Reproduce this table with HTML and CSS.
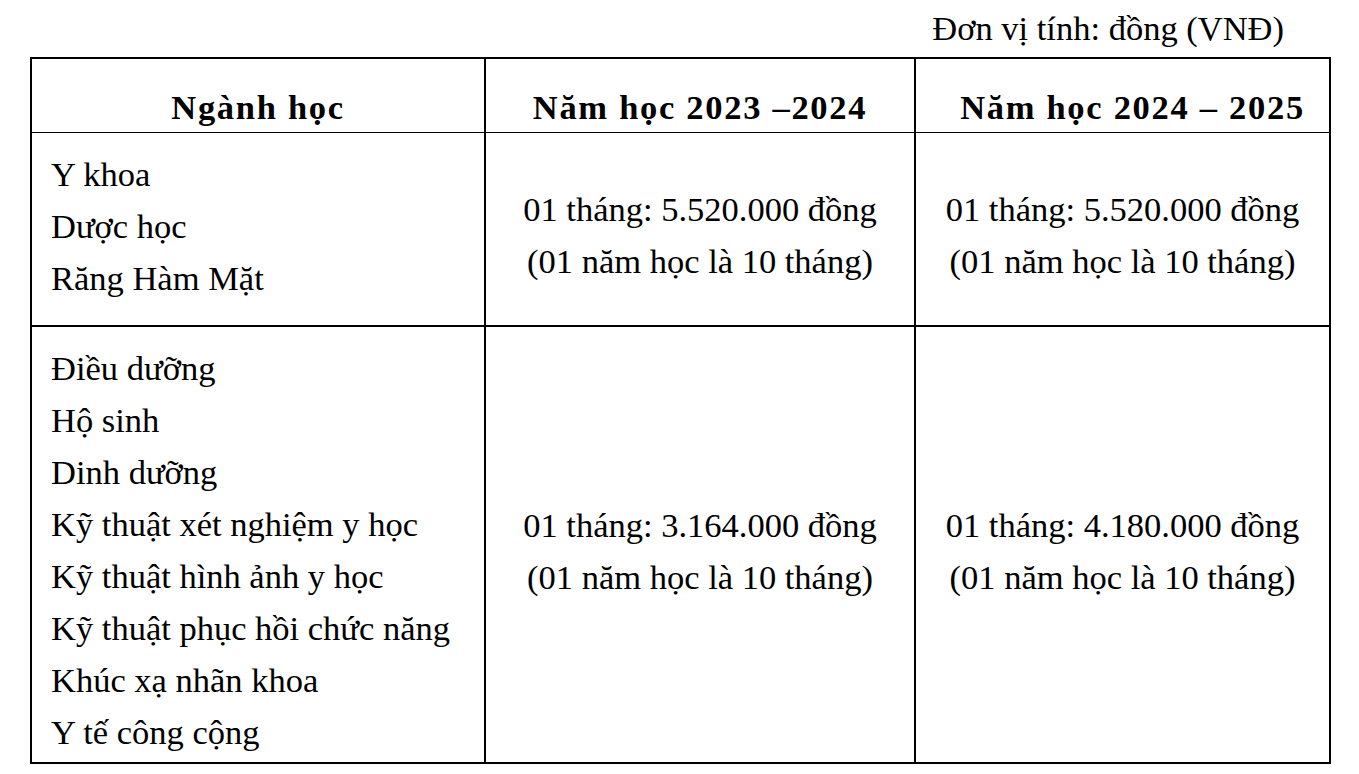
FILE: index.html
```html
<!DOCTYPE html>
<html lang="vi">
<head>
<meta charset="utf-8">
<title>Học phí</title>
<link rel="stylesheet" href="styles.css">
</head>
<body>
<div class="page">
  <p class="unit">Đơn vị tính: đồng (VNĐ)</p>
  <table class="fees">
    <colgroup>
      <col class="c1">
      <col class="c2">
      <col class="c3">
    </colgroup>
    <thead>
      <tr class="head">
        <th>Ngành học</th>
        <th>Năm học 2023 –2024</th>
        <th class="shift">Năm học 2024 – 2025</th>
      </tr>
    </thead>
    <tbody>
      <tr class="r1">
        <td class="majors">Y khoa<br>Dược học<br>Răng Hàm Mặt</td>
        <td class="fee">01 tháng: 5.520.000 đồng<br>(01 năm học là 10 tháng)</td>
        <td class="fee">01 tháng: 5.520.000 đồng<br>(01 năm học là 10 tháng)</td>
      </tr>
      <tr class="r2">
        <td class="majors">Điều dưỡng<br>Hộ sinh<br>Dinh dưỡng<br>Kỹ thuật xét nghiệm y học<br>Kỹ thuật hình ảnh y học<br>Kỹ thuật phục hồi chức năng<br>Khúc xạ nhãn khoa<br>Y tế công cộng</td>
        <td class="fee">01 tháng: 3.164.000 đồng<br>(01 năm học là 10 tháng)</td>
        <td class="fee">01 tháng: 4.180.000 đồng<br>(01 năm học là 10 tháng)</td>
      </tr>
    </tbody>
  </table>
</div>
</body>
</html>
```

FILE: styles.css
```css
html, body {
  margin: 0;
  padding: 0;
  background: #fff;
}

body {
  font-family: "Liberation Serif", "Times New Roman", serif;
  color: #000;
  font-size: 34.5px;
}

.page {
  width: 1299px;
  margin-left: 30px;
  padding-top: 8px;
}

.unit {
  margin: 0;
  line-height: 40px;
  height: 40px;
  text-align: right;
  padding-right: 45px;
  margin-bottom: 9px;
}

.fees {
  width: 1299px;
  border-collapse: collapse;
  table-layout: fixed;
  border: 2px solid #000;
}

.c1 { width: 454px; }
.c2 { width: 430px; }
.c3 { width: 415px; }

.fees th,
.fees td {
  box-sizing: border-box;
  border-left: 2px solid #000;
  border-right: 2px solid #000;
  padding: 0;
}

.head th {
  height: 74px;
  font-weight: bold;
  letter-spacing: 1.7px;
  line-height: 40px;
  vertical-align: bottom;
  padding-bottom: 5px;
  text-align: center;
  border-bottom: 1px solid #000;
}

.head .shift {
  padding-left: 20px;
}

.r1 td {
  height: 194px;
  border-bottom: 2px solid #000;
}

.r2 td {
  height: 437px;
}

.fees .majors {
  vertical-align: top;
  line-height: 52px;
  padding: 15px 0 0 19px;
}

.fees .fee {
  text-align: center;
  vertical-align: middle;
  line-height: 52px;
  padding-top: 12px;
}
```
